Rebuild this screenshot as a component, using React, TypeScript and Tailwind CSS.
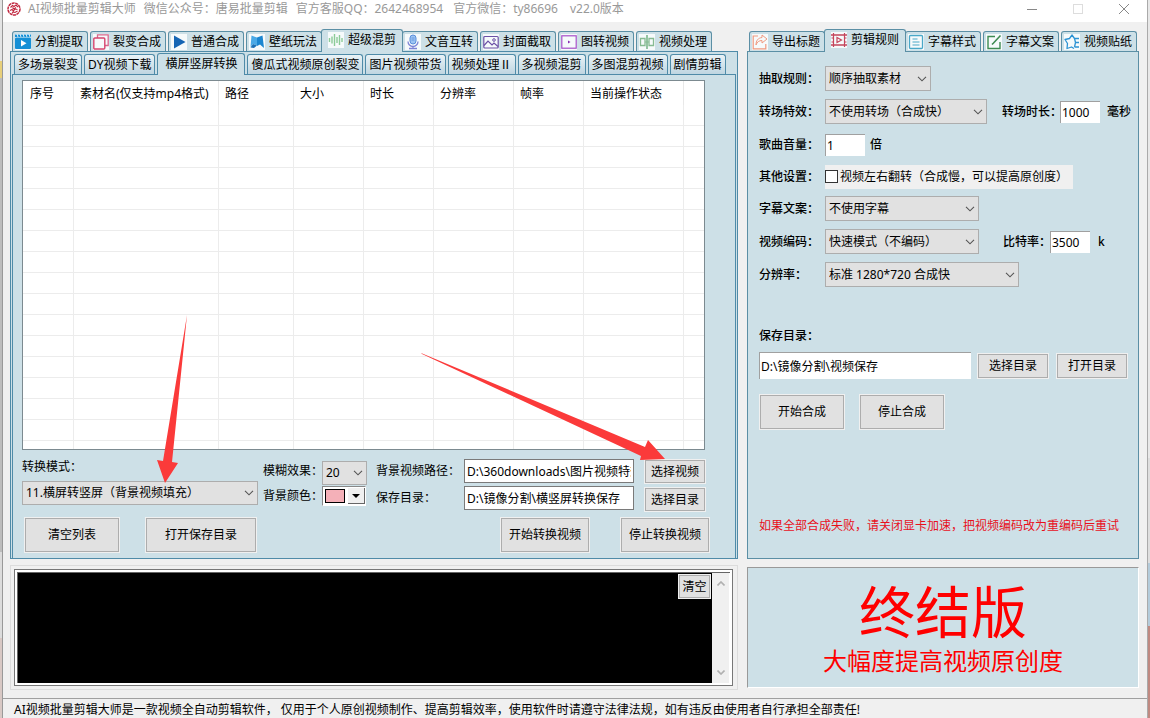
import { useState } from 'react';
import type { ReactNode } from 'react';
import clsx from 'clsx';

interface TabItem {
  label: string;
  icon?: ReactNode;
}

interface TabStripProps {
  name: string;
  items: TabItem[];
  initial: number;
}

function Icon({ children }: { children: ReactNode }) {
  return (
    <svg viewBox="0 0 16 16" className="size-4 shrink-0 bg-[#f6fafb]" fill="none" aria-hidden="true">
      {children}
    </svg>
  );
}

const MODE_TABS: TabItem[] = [
  {
    label: '分割提取',
    icon: (
      <Icon>
        <rect x="0" y="3.500" width="16" height="11.500" rx="1" fill="#1590d6" />
        <path d="M0 .5h16v2.500H0z" fill="#1590d6" />
        <path d="M2 0l1 3M5 0l1 3M8 0l1 3M11 0l1 3M14 0l1 3" stroke="#fff" strokeWidth=".8" />
        <path d="M6 6l5.500 3.300L6 12.500z" fill="#fff" />
      </Icon>
    ),
  },
  {
    label: '裂变合成',
    icon: (
      <Icon>
        <path d="M4.500 4V.8h10.700v10.700H12" stroke="#d8688c" strokeWidth="1.300" />
        <rect x=".8" y="4" width="11" height="11" rx="1" stroke="#d6456f" strokeWidth="1.400" />
      </Icon>
    ),
  },
  {
    label: '普通合成',
    icon: (
      <Icon>
        <path d="M3 1.500L14.500 8 3 14.500z" fill="#1565b4" />
      </Icon>
    ),
  },
  {
    label: '壁纸玩法',
    icon: (
      <Icon>
        <path d="M2.500 1.500L8 3.500v8l-4-1.500-2.500 3z" fill="#4aa9e6" />
        <path d="M8 3.500l5.500-2L15 14l-4-3.500L8 12z" fill="#1b86d0" />
        <path d="M1.500 13.500L4 10l4 1.500-3 2.500z" fill="#1b6fb4" />
      </Icon>
    ),
  },
  {
    label: '超级混剪',
    icon: (
      <Icon>
        <path d="M1.500 6v4M4 4.500v7M6.500 2v12M9 5v6M11.500 3v10M14 6v4" stroke="#8ccb98" strokeWidth="1.400" />
      </Icon>
    ),
  },
  {
    label: '文音互转',
    icon: (
      <Icon>
        <rect x="5" y="1" width="6" height="9" rx="3" fill="#9cc4f2" stroke="#5a8edb" />
        <path d="M3 7.500a5 5 0 0010 0M8 12.500V14M4 14.500h8" stroke="#7d84d6" strokeWidth="1.300" />
        <path d="M6.500 4h3M6.500 6h3" stroke="#5a8edb" strokeWidth=".8" />
      </Icon>
    ),
  },
  {
    label: '封面截取',
    icon: (
      <Icon>
        <rect x=".8" y="2.500" width="14.400" height="11.500" rx="1" stroke="#6b50a6" strokeWidth="1.200" />
        <path d="M1 11.500l4-4.500 4 4 2-2 4 3.500" stroke="#6b50a6" strokeWidth="1.200" />
        <circle cx="11" cy="6" r="1.300" stroke="#6b50a6" />
      </Icon>
    ),
  },
  {
    label: '图转视频',
    icon: (
      <Icon>
        <rect x=".8" y="1.800" width="14.400" height="12.400" stroke="#a64fc9" strokeWidth="1.200" />
        <path d="M7 6.500l2.500 1.500L7 9.500z" fill="#8b2fb5" />
      </Icon>
    ),
  },
  {
    label: '视频处理',
    icon: (
      <Icon>
        <path d="M6 4.500H1.500v7H6zM10 4.500h4.500v7H10z" stroke="#86bb92" strokeWidth="1.300" />
        <path d="M8 1v14" stroke="#5fa872" strokeWidth="1.300" />
        <path d="M6 8h4" stroke="#86bb92" />
      </Icon>
    ),
  },
];

const SCENE_TABS: TabItem[] = [
  { label: '多场景裂变' },
  { label: 'DY视频下载' },
  { label: '横屏竖屏转换' },
  { label: '傻瓜式视频原创裂变' },
  { label: '图片视频带货' },
  { label: '视频处理Ⅱ' },
  { label: '多视频混剪' },
  { label: '多图混剪视频' },
  { label: '剧情剪辑' },
];

const RULE_TABS: TabItem[] = [
  {
    label: '导出标题',
    icon: (
      <Icon>
        <path d="M6 2H1.200v12.800h12.600V10" stroke="#f09a80" strokeWidth="1.200" />
        <path d="M10 1l5 4-5 4V6.500c-3 0-5 1.500-6 4.500 0-4.500 2-7 6-7.500z" stroke="#f09a80" />
      </Icon>
    ),
  },
  {
    label: '剪辑规则',
    icon: (
      <Icon>
        <path d="M0 3h16M0 13h16" stroke="#c4455c" strokeWidth="1.300" />
        <path d="M2.500 1v14M13.500 1v14" stroke="#c4455c" strokeWidth="1.200" />
        <path d="M.5 6h2M.5 10h2M13.500 6h2M13.500 10h2" stroke="#c4455c" />
        <path d="M6 5.500l4.500 2.500L6 10.500z" stroke="#c4455c" strokeWidth="1.200" />
      </Icon>
    ),
  },
  {
    label: '字幕样式',
    icon: (
      <Icon>
        <rect x="1.500" y="1.500" width="13" height="13" rx="1" stroke="#4aa8c8" strokeWidth="1.300" />
        <path d="M4.500 5h5M4.500 8h7M4.500 11h7" stroke="#4aa8c8" strokeWidth="1.200" />
      </Icon>
    ),
  },
  {
    label: '字幕文案',
    icon: (
      <Icon>
        <path d="M9 2.500H2v12h12V8" stroke="#3e8b52" strokeWidth="1.400" />
        <path d="M14.500 1.500L7.500 9 6 10.500" stroke="#3e8b52" strokeWidth="1.600" />
      </Icon>
    ),
  },
  {
    label: '视频贴纸',
    icon: (
      <Icon>
        <path
          d="M10.500 4.500L8 1 5.500 4.500 1 5.500l2.500 4-.5 5 4.500-1.500 2.500 1.500M10.500 4.500H15M11 8.500h4M10.500 13H15M10.500 4.500l1 4-1 4.500"
          stroke="#2c93d4"
          strokeWidth="1.300"
          strokeLinejoin="round"
        />
      </Icon>
    ),
  },
];

const COLUMNS = [
  { label: '序号', width: 'w-[51px]' },
  { label: '素材名(仅支持mp4格式)', width: 'w-[145px]' },
  { label: '路径', width: 'w-[75px]' },
  { label: '大小', width: 'w-[70px]' },
  { label: '时长', width: 'w-[70px]' },
  { label: '分辨率', width: 'w-[80px]' },
  { label: '帧率', width: 'w-[70px]' },
  { label: '当前操作状态', width: 'w-[100px]' },
  { label: '', width: '' },
];

const EMPTY_ROWS = Array.from({ length: 17 }, (_, i) => i);

function MainTabs({ name, items, initial }: TabStripProps) {
  const [active, setActive] = useState(initial);
  return (
    <div role="tablist" aria-label={name} className="flex h-[22px] items-end gap-[2px] pl-[2px]">
      {items.map((item, i) => (
        <button
          key={item.label}
          type="button"
          role="tab"
          aria-selected={i === active}
          onClick={() => setActive(i)}
          className={clsx(
            'flex shrink-0 items-center gap-1 rounded-t-[3px] border border-b-0 border-[#5b8fa5] bg-[#cde0e7] whitespace-nowrap',
            i === active ? 'relative z-10 -mx-[3px] -mb-px h-[23px] w-[82px] px-[6px] pb-[2px]' : 'h-5 w-[76px] px-[2px]',
          )}
        >
          {item.icon}
          {item.label}
        </button>
      ))}
    </div>
  );
}

function SceneTabs({ name, items, initial }: TabStripProps) {
  const [active, setActive] = useState(initial);
  return (
    <div role="tablist" aria-label={name} className="flex h-[22px] items-end gap-[2px] pl-[2px]">
      {items.map((item, i) => (
        <button
          key={item.label}
          type="button"
          role="tab"
          aria-selected={i === active}
          onClick={() => setActive(i)}
          className={clsx(
            'shrink-0 rounded-t-[3px] border border-b-0 border-[#4f8ba8] whitespace-nowrap',
            i === active
              ? 'relative z-10 -mb-px h-[22px] bg-[#cde0e7] px-[7px] pb-[2px]'
              : 'h-5 bg-linear-to-b from-[#e9f2f6] to-[#bfd6e1] px-[3px]',
          )}
        >
          {item.label}
        </button>
      ))}
    </div>
  );
}

function PushButton({ className, children }: { className: string; children: ReactNode }) {
  return (
    <button
      type="button"
      className={clsx(
        'shrink-0 border border-[#adadad] bg-[#e1e1e1] whitespace-nowrap outline outline-[#f0f0f0] hover:border-[#0078d7] hover:bg-[#e5f1fb]',
        className,
      )}
    >
      {children}
    </button>
  );
}

interface PickerProps {
  id: string;
  options: string[];
  className: string;
}

function Picker({ id, options, className }: PickerProps) {
  return (
    <div className={clsx('relative', className)}>
      <select id={id} className="h-full w-full appearance-none border border-[#adadad] bg-[#e1e1e1] pr-5 pl-[3px]">
        {options.map((option) => (
          <option key={option}>{option}</option>
        ))}
      </select>
      <svg viewBox="0 0 10 6" className="pointer-events-none absolute top-1/2 right-1 h-[6px] w-[10px] -translate-y-1/2" fill="none">
        <path d="M1 .8l4 4 4-4" stroke="#555" strokeWidth="1.100" />
      </svg>
    </div>
  );
}

function TitleBar() {
  return (
    <header className="flex h-[22px] items-start bg-white pl-1 text-[#999]">
      <svg viewBox="0 0 14 14" className="mt-[2px] size-[14px]" fill="none" aria-hidden="true">
        <circle cx="7" cy="7" r="6" stroke="#c0273f" strokeWidth="1.500" strokeDasharray="3 .6" />
        <path
          d="M3.500 5.500l2-2 1.500 1 2-1.500 2 2M3 8.500l2-1 1.500 1.500L8 7l2.500.5M5 11.500L6 10l2 .5 2.500-1.500M5.500 5.500L7 7l2-1.500"
          stroke="#c0273f"
          strokeWidth="1.100"
        />
      </svg>
      <h1 className="ml-[7px] flex leading-[18px] whitespace-nowrap">
        <span>AI视频批量剪辑大师</span>
        <span className="ml-2">微信公众号：唐易批量剪辑</span>
        <span className="ml-2">官方客服QQ：2642468954</span>
        <span className="ml-[10px]">官方微信：ty86696</span>
        <span className="ml-3">v22.0版本</span>
      </h1>
      <div className="ml-auto flex h-[18px]">
        <button type="button" aria-label="最小化" className="grid w-[46px] place-items-center">
          <svg viewBox="0 0 12 12" className="size-3" fill="none">
            <path d="M1 6.500h10" stroke="#888" />
          </svg>
        </button>
        <button type="button" aria-label="最大化" className="grid w-[46px] place-items-center">
          <svg viewBox="0 0 12 12" className="size-3" fill="none">
            <rect x="1.500" y="1.500" width="9" height="9" stroke="#ddd" />
          </svg>
        </button>
        <button type="button" aria-label="关闭" className="grid w-[46px] place-items-center">
          <svg viewBox="0 0 12 12" className="size-3" fill="none">
            <path d="M1 1l10 10M11 1L1 11" stroke="#888" />
          </svg>
        </button>
      </div>
    </header>
  );
}

function MaterialTable() {
  return (
    <div className="mr-[30px] ml-[9px] h-[370px] overflow-hidden border border-[#7c8a90] bg-white">
      <table className="w-full table-fixed border-separate border-spacing-0">
        <thead>
          <tr>
            {COLUMNS.map((column, i) => (
              <th
                key={i}
                className={clsx(
                  'h-6 border-[#e8e8e8] p-0 pt-[2px] text-left font-normal whitespace-nowrap not-last:border-r',
                  i === 0 ? 'pl-[7px]' : 'pl-[6px]',
                  column.width,
                )}
              >
                {column.label}
              </th>
            ))}
          </tr>
        </thead>
        <tbody>
          {EMPTY_ROWS.map((row) => (
            <tr key={row}>
              {COLUMNS.map((_, i) => (
                <td key={i} className="h-[21px] border-b border-[#ececec] p-0 not-last:border-r" />
              ))}
            </tr>
          ))}
        </tbody>
      </table>
    </div>
  );
}

function ConvertControls() {
  const pathInput = 'h-6 w-[170px] border border-[#7a7a7a] bg-white px-[2px]';
  return (
    <>
      <div className="mr-[30px] ml-[9px] flex items-start pt-[9px] whitespace-nowrap">
        <div className="min-w-0 flex-1">
          <label htmlFor="mode" className="block h-[22px] leading-4">转换模式：</label>
          <Picker id="mode" className="h-6" options={['11.横屏转竖屏（背景视频填充）']} />
        </div>

        <div className="ml-[5px] grid grid-cols-[59px_45px] items-center gap-y-px pt-[2px]">
          <label htmlFor="blur" className="pb-1">模糊效果：</label>
          <Picker id="blur" className="h-6" options={['20', '10', '30']} />
          <label htmlFor="background">背景颜色：</label>
          <button
            id="background"
            type="button"
            className="flex h-5 w-[44px] items-center border border-[#888] border-r-white border-b-white bg-white pl-[2px]"
          >
            <span className="h-[14px] w-5 border border-black bg-[#f4b0b8]" />
            <span className="ml-[3px] grid h-4 flex-1 place-items-center border-r border-b border-[#666] bg-[#f0f0f0]">
              <svg viewBox="0 0 8 4" className="h-1 w-2">
                <path d="M0 0h8L4 4z" fill="#000" />
              </svg>
            </span>
          </button>
        </div>

        <div className="ml-[9px] grid grid-cols-[88px_170px] items-center gap-y-[3px]">
          <label htmlFor="bgPath">背景视频路径：</label>
          <input id="bgPath" className={pathInput} defaultValue="D:\360downloads\图片视频特效" />
          <label htmlFor="convertDir">保存目录：</label>
          <input id="convertDir" className={pathInput} defaultValue="D:\镜像分割\横竖屏转换保存" />
        </div>

        <div className="ml-[11px] flex flex-col gap-[5px] pt-px">
          <PushButton className="h-[23px] w-[60px]">选择视频</PushButton>
          <PushButton className="h-[23px] w-[60px]">选择目录</PushButton>
        </div>
      </div>

      <div className="mt-[7px] flex h-[34px] pr-[26px] pl-3">
        <PushButton className="w-[94px]">清空列表</PushButton>
        <PushButton className="ml-[27px] w-[110px]">打开保存目录</PushButton>
        <PushButton className="ml-auto w-[88px]">开始转换视频</PushButton>
        <PushButton className="ml-8 w-[88px]">停止转换视频</PushButton>
      </div>
    </>
  );
}

function LogConsole() {
  return (
    <section aria-label="日志" className="mt-[6px] border border-[#dcdcdc] p-[3px] pr-1">
      <div className="border border-[#777] bg-white p-[2px]">
        <div className="flex h-[111px] border-t border-l border-[#666] bg-[#f0f0f0]">
          <div className="flex flex-1 items-start justify-end bg-black p-[2px]">
            <PushButton className="h-[23px] w-[31px]">清空</PushButton>
          </div>
          <div className="flex w-[18px] flex-col items-center justify-between border-r border-white py-2">
            <svg viewBox="0 0 8 5" className="h-[5px] w-2" fill="none">
              <path d="M.5 4.500L4 1l3.500 3.500" stroke="#b0b0b0" strokeWidth="1.600" />
            </svg>
            <svg viewBox="0 0 8 5" className="h-[5px] w-2" fill="none">
              <path d="M.5.5L4 4 7.500.5" stroke="#b0b0b0" strokeWidth="1.600" />
            </svg>
          </div>
        </div>
      </div>
    </section>
  );
}

function RulesPanel() {
  const row = 'flex h-[33px] shrink-0 items-center whitespace-nowrap';
  const rowLabel = 'w-[66px] shrink-0 font-medium';
  const smallInput = 'h-[22px] w-10 border-t border-l border-[#a0a0a0] bg-white px-px';
  return (
    <section className="flex flex-1 flex-col border border-[#5b8fa5] bg-[#cde0e7] pt-[10px] pr-1 pb-6 pl-[11px]">
      <div className={row}>
        <label htmlFor="pick" className={rowLabel}>抽取规则：</label>
        <Picker id="pick" className="h-[25px] w-[106px]" options={['顺序抽取素材']} />
      </div>
      <div className={row}>
        <label htmlFor="transition" className={rowLabel}>转场特效：</label>
        <Picker id="transition" className="h-[25px] w-[162px]" options={['不使用转场（合成快）']} />
        <label htmlFor="duration" className="ml-[15px] w-[58px] font-medium">转场时长：</label>
        <input id="duration" className={smallInput} defaultValue="1000" />
        <span className="ml-[7px] font-medium">毫秒</span>
      </div>
      <div className={row}>
        <label htmlFor="volume" className={rowLabel}>歌曲音量：</label>
        <input id="volume" className={smallInput} defaultValue="1" />
        <span className="ml-[5px] font-medium">倍</span>
      </div>
      <div className="flex h-[31px] shrink-0 items-center whitespace-nowrap">
        <span className={rowLabel}>其他设置：</span>
        <label className="flex h-6 w-[248px] items-center gap-[2px] bg-[#f0f0f0]">
          <input
            type="checkbox"
            className="size-[13px] shrink-0 appearance-none border border-[#333] bg-white checked:bg-[#333]"
          />
          视频左右翻转（合成慢，可以提高原创度）
        </label>
      </div>
      <div className={row}>
        <label htmlFor="subtitle" className={rowLabel}>字幕文案：</label>
        <Picker id="subtitle" className="h-[25px] w-[154px]" options={['不使用字幕']} />
      </div>
      <div className={row}>
        <label htmlFor="encoding" className={rowLabel}>视频编码：</label>
        <Picker id="encoding" className="h-[25px] w-[154px]" options={['快速模式（不编码）']} />
        <label htmlFor="bitrate" className="ml-6 w-[47px] font-medium">比特率：</label>
        <input id="bitrate" className={smallInput} defaultValue="3500" />
        <span className="ml-2 font-medium">k</span>
      </div>
      <div className={row}>
        <label htmlFor="resolution" className={rowLabel}>分辨率：</label>
        <Picker id="resolution" className="h-[25px] w-[194px]" options={['标准 1280*720 合成快']} />
      </div>

      <label htmlFor="saveDir" className="mt-[37px] h-6 leading-4 font-medium">保存目录：</label>
      <div className="flex items-center">
        <input
          id="saveDir"
          className="h-[27px] w-[212px] border-t border-l border-[#a0a0a0] bg-white px-px"
          defaultValue="D:\镜像分割\视频保存"
        />
        <PushButton className="ml-[7px] h-6 w-[70px]">选择目录</PushButton>
        <PushButton className="ml-[9px] h-6 w-[70px]">打开目录</PushButton>
      </div>
      <div className="mt-4 flex gap-4 pl-px">
        <PushButton className="h-[34px] w-[84px]">开始合成</PushButton>
        <PushButton className="h-[34px] w-[84px]">停止合成</PushButton>
      </div>
      <p className="mt-auto leading-4 whitespace-nowrap text-[#e8101c]">
        如果全部合成失败，请关闭显卡加速，把视频编码改为重编码后重试
      </p>
    </section>
  );
}

// hint arrows drawn above the window
function GuideArrows() {
  return (
    <>
      <svg viewBox="0 0 32 168" className="pointer-events-none absolute top-[315px] left-[156px] z-20 h-[168px] w-8">
        <path d="M31 0L7 146l-6-1 8 23 13-20-6-1z" fill="#fb3a3a" />
      </svg>
      <svg viewBox="0 0 244 108" className="pointer-events-none absolute top-[353px] left-[421px] z-20 h-[108px] w-[244px]">
        <path d="M0 0l1 1 219 102-1 4 25-1-17-19-3 7z" fill="#fb3a3a" />
      </svg>
    </>
  );
}

export default function App() {
  return (
    <div className="relative flex min-h-screen overflow-hidden font-['Noto_Sans','Noto_Sans_CJK_SC',sans-serif] text-xs text-black">
      <div aria-hidden="true" className="flex w-[3px] shrink-0 flex-col border-r border-[#999]">
        <div className="flex-[61] bg-[#e4e4e4]" />
        <div className="flex-[17] bg-[#e8cf7a]" />
        <div className="flex-[473] bg-[#bdbdbd]" />
        <div className="flex-[86] bg-[#dcdcdc]" />
        <div className="flex-[81] bg-[#d8c8c4]" />
      </div>

      <div className="flex min-w-0 flex-1 flex-col bg-[#f0f0f0]">
        <TitleBar />
        <main className="flex flex-1 gap-[9px] pt-[7px] pr-2 pl-[7px]">
          <div className="flex min-w-0 flex-1 flex-col">
            <MainTabs name="功能" items={MODE_TABS} initial={4} />
            <section className="border border-[#4f8ba8] bg-[#cde0e7] px-px">
              <SceneTabs name="场景" items={SCENE_TABS} initial={2} />
              <div className="border border-b-0 border-[#4f8ba8] pt-[5px] pb-[6px]">
                <MaterialTable />
                <ConvertControls />
              </div>
            </section>
            <LogConsole />
          </div>

          <div className="flex w-[392px] shrink-0 flex-col">
            <MainTabs name="设置" items={RULE_TABS} initial={1} />
            <RulesPanel />
            <section className="mt-2 mb-[2px] flex h-[121px] flex-col items-center border border-[#999] border-r-white border-b-white bg-[#cde0e7] pt-[11px] text-[#f00]">
              <h2 className="text-[56px] leading-[64px]">终结版</h2>
              <p className="text-2xl leading-9">大幅度提高视频原创度</p>
            </section>
          </div>
        </main>
        <footer className="mt-2 h-[21px] border-t border-[#a0a0a0] pt-[2px] pl-[11px] leading-[18px] whitespace-nowrap">
          AI视频批量剪辑大师是一款视频全自动剪辑软件， 仅用于个人原创视频制作、提高剪辑效率，使用软件时请遵守法律法规，如有违反由使用者自行承担全部责任!
        </footer>
      </div>

      <div aria-hidden="true" className="flex w-[3px] shrink-0 flex-col border-l border-[#aaa]">
        <div className="flex-[457] bg-[#e8e8e8]" />
        <div className="flex-[105] bg-[#dedede]" />
        <div className="flex-[63] bg-[#b4cbda]" />
        <div className="flex-[93] bg-[#c08a82]" />
      </div>

      <GuideArrows />
    </div>
  );
}
